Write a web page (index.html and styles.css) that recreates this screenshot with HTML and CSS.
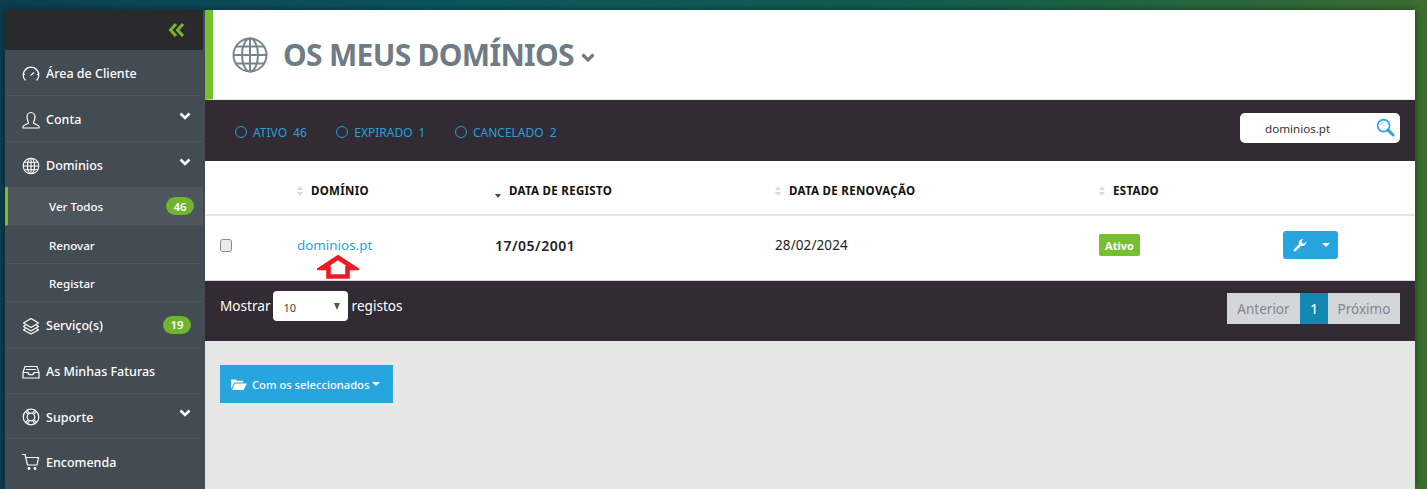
FILE: index.html
```html
<!DOCTYPE html>
<html lang="pt">
<head>
<meta charset="utf-8">
<title>Os Meus Domínios</title>
<link rel="stylesheet" href="styles.css">
</head>
<body>
<div class="app">
  <aside class="sidebar">
    <div class="side-top">
      <svg class="collapse" viewBox="0 0 16 14"><path d="M7.500 1 2 7l5.500 6M14.500 1 9 7l5.500 6" fill="none" stroke="#7ab52c" stroke-width="3"/></svg>
    </div>
    <nav class="menu">
      <a class="item h46">
        <svg class="ico" viewBox="0 0 18 18"><path d="M3.500 15.500A7.800 7.800 0 1 1 14.500 15.500M3 9.500H1.500M16.500 9.500H15M9 3V2M4.500 5 3.800 4.300M13.500 5l.7-.7M8.500 10.500 12 7.500" fill="none" stroke="#fff" stroke-width="1.200"/></svg>
        <span class="label">Área de Cliente</span>
      </a>
      <a class="item h46">
        <svg class="ico" viewBox="0 0 18 18"><path d="M1 17v-1.500c0-1.700 5-2.500 5.500-3.500.3-.8-1.500-2.500-1.500-6 0-2.500 1.700-4.500 4-4.500s4 2 4 4.500c0 3.500-1.800 5.200-1.500 6 .5 1 5.500 1.800 5.500 3.500V17z" fill="none" stroke="#fff" stroke-width="1.200"/></svg>
        <span class="label">Conta</span>
        <svg class="chev" viewBox="0 0 12 8"><path d="M1.500 1.500 6 6l4.500-4.500" fill="none" stroke="#fff" stroke-width="2.600"/></svg>
      </a>
      <a class="item h45">
        <svg class="ico" viewBox="0 0 18 18"><g fill="none" stroke="#fff" stroke-width="1.100"><circle cx="9" cy="9" r="7.800"/><ellipse cx="9" cy="9" rx="3.600" ry="7.800"/><path d="M9 1.200v15.600M1.200 9h15.600M2.200 5.200h13.600M2.200 12.800h13.600"/></g></svg>
        <span class="label">Dominios</span>
        <svg class="chev" viewBox="0 0 12 8"><path d="M1.500 1.500 6 6l4.500-4.500" fill="none" stroke="#fff" stroke-width="2.600"/></svg>
      </a>
      <a class="sub active"><span class="label">Ver Todos</span><span class="count">46</span></a>
      <a class="sub"><span class="label">Renovar</span></a>
      <a class="sub"><span class="label">Registar</span></a>
      <a class="item h46">
        <svg class="ico" viewBox="0 0 18 18"><g fill="none" stroke="#fff" stroke-width="1.200" stroke-linejoin="round"><path d="M9 1.500 16.500 6 9 10.500 1.500 6z"/><path d="M3.500 8 1.500 9.500 9 14l7.500-4.500L14.500 8"/><path d="M3.500 11.500 1.500 13 9 17l7.500-4-2-1.500"/></g></svg>
        <span class="label">Serviço(s)</span><span class="count c2">19</span>
      </a>
      <a class="item h46">
        <svg class="ico" viewBox="0 0 18 18"><path d="M1 9.500 3 3.500h12l2 6v5.500H1zM1 9.500h5c0 3 6 3 6 0h5M4 6.500h10" fill="none" stroke="#fff" stroke-width="1.200"/></svg>
        <span class="label">As Minhas Faturas</span>
      </a>
      <a class="item h45">
        <svg class="ico" viewBox="0 0 18 18"><g fill="none" stroke="#fff" stroke-width="1.200"><circle cx="9" cy="9" r="7.800"/><circle cx="9" cy="9" r="3.800"/><path d="M3.500 3.500 6.300 6.300M14.500 3.500l-2.800 2.800M3.500 14.500l2.800-2.800M14.500 14.500l-2.800-2.800M5.500 2.500 7.500 5.500M12.500 2.500l-2 3M5.500 15.500l2-3M12.500 15.500l-2-3"/></g></svg>
        <span class="label">Suporte</span>
        <svg class="chev" viewBox="0 0 12 8"><path d="M1.500 1.500 6 6l4.500-4.500" fill="none" stroke="#fff" stroke-width="2.600"/></svg>
      </a>
      <a class="item last">
        <svg class="ico" viewBox="0 0 18 18"><path d="M0 1.500h3l2.500 10.500h9.500l1.500-7.500H4" fill="none" stroke="#fff" stroke-width="1.200"/><circle cx="7" cy="15.500" r="1.400" fill="#fff"/><circle cx="13" cy="15.500" r="1.400" fill="#fff"/></svg>
        <span class="label">Encomenda</span>
      </a>
    </nav>
  </aside>

  <main class="main">
    <header class="title-bar">
      <svg class="title-ico" viewBox="0 0 36 36"><g fill="none" stroke="#78848c" stroke-width="2"><circle cx="18" cy="18" r="16.500"/><ellipse cx="18" cy="18" rx="8" ry="16.500"/><path d="M18 1.500v33M1.500 18h33M4 9.500h28M4 26.500h28"/></g></svg>
      <h1>OS MEUS DOMÍNIOS</h1>
      <svg class="title-chev" viewBox="0 0 14 9"><path d="M1.500 1.500 7 7l5.500-5.500" fill="none" stroke="#6e7b84" stroke-width="3.200"/></svg>
    </header>

    <section class="toolbar">
      <div class="filters">
        <a class="filter"><i class="ring"></i>ATIVO<b>46</b></a>
        <a class="filter"><i class="ring"></i>EXPIRADO<b>1</b></a>
        <a class="filter"><i class="ring"></i>CANCELADO<b>2</b></a>
      </div>
      <div class="search">
        <span>dominios.pt</span>
        <svg class="search-ico" viewBox="0 0 20 20"><circle cx="8" cy="8" r="6.300" fill="none" stroke="#26a5df" stroke-width="1.700"/><path d="M5 7.500A3.500 3.500 0 0 1 8 4.500" fill="none" stroke="#8dd0ef" stroke-width="1"/><path d="M12.500 12.500 18 18" stroke="#26a5df" stroke-width="3" stroke-linecap="round"/></svg>
      </div>
    </section>

    <section class="table">
      <div class="row head">
        <span></span>
        <span class="th"><i class="sort"></i>DOMÍNIO</span>
        <span class="th"><i class="sort down"></i>DATA DE REGISTO</span>
        <span class="th"><i class="sort"></i>DATA DE RENOVAÇÃO</span>
        <span class="th"><i class="sort"></i>ESTADO</span>
        <span></span>
      </div>
      <div class="row body">
        <span class="check"></span>
        <a class="domain">dominios.pt</a>
        <span class="reg">17/05/2001</span>
        <span class="ren">28/02/2024</span>
        <span class="status-cell"><em class="status">Ativo</em></span>
        <span class="tools">
          <svg class="wrench" viewBox="0 0 14 14"><path d="M1 13c-.6-.6-.5-1.300 0-1.800L6 6.300C5.200 3.800 7 .8 10.500 1L8.500 3.200l.6 2 2 .6L13 3.700c.3 3.300-2.700 5-5.200 4.200L2.800 13c-.5.500-1.200.6-1.800 0z" fill="#fff"/></svg>
          <i class="caret"></i>
        </span>
      </div>
      <svg class="arrow" viewBox="0 0 42 24"><path d="M21 2.500 37 13H30.500V21.500H11.500V13H5z" fill="#fff" stroke="#ed1c24" stroke-width="4.600"/></svg>
    </section>

    <section class="footer">
      <div class="length">
        <span>Mostrar</span>
        <span class="select"><span>10</span><i class="tri"></i></span>
        <span>registos</span>
      </div>
      <div class="pager">
        <a class="page prev">Anterior</a>
        <a class="page current">1</a>
        <a class="page next">Próximo</a>
      </div>
    </section>

    <section class="rest">
      <a class="bulk">
        <svg class="folder" viewBox="0 0 17 13"><path d="M0 12V1.500h5l1.500 1.500H13v2H3.500zM1 13l3-7h13l-3.500 7z" fill="#fff"/></svg>
        Com os seleccionados<i class="caret small"></i>
      </a>
    </section>
  </main>
</div>
</body>
</html>
```

FILE: styles.css
```css
* { box-sizing: border-box; }
html, body { margin: 0; height: 100%; }
body {
  width: 1427px;
  height: 489px;
  overflow: hidden;
  padding: 10px 12px 0 5px;
  font-family: "Noto Sans", "Open Sans", sans-serif;
  background: linear-gradient(90deg, #0d3f50 0%, #0c5560 30%, #16604a 70%, #3d6f30 100%);
}
a { text-decoration: none; }
.app {
  display: grid;
  grid-template-columns: 200px 1210px;
  height: 479px;
  box-shadow: 0 0 8px rgba(0, 0, 0, .45);
}
.sidebar { background: #424c52; display: flex; flex-direction: column; overflow: hidden; }
.side-top {
  height: 40px;
  width: 198px;
  background: #2a2a2c;
  display: flex;
  align-items: center;
  justify-content: flex-end;
  padding: 0 18px 0 0;
  flex: none;
}
.collapse { width: 17px; height: 14px; }
.menu { display: flex; flex-direction: column; width: 198px; flex: 1; }
.item, .sub {
  display: flex;
  align-items: center;
  color: #fff;
  border-bottom: 1px solid #4a545a;
  flex: none;
}
.item { padding: 2px 11px 0 17px; font-size: 12.500px; font-weight: 500; }
.h46 { height: 46px; }
.h45 { height: 46px; }
.item.h45:nth-child(3) { height: 45px; border-bottom: 0; }
.item.h45:nth-child(9) { height: 45px; }
.item.last { flex: 1; border: 0; padding: 0 11px 4px 17px; }
.ico { width: 18px; height: 18px; margin-right: 6px; flex: none; }
.label { flex: 1; white-space: nowrap; }
.chev { width: 12px; height: 8px; margin: -8px 1px 0 0; }
.sub {
  height: 38px;
  padding: 2px 9px 0 44px;
  font-size: 11.600px;
  font-weight: 500;
}
.sub.active { background: #4c565c; border-left: 3px solid #76bf2f; padding: 0 9px 0 41px; border-bottom: 1px solid #424c52; height: 39px; }
.count {
  width: 28px;
  height: 18px;
  border-radius: 9px;
  background: #6fb52f;
  color: #fff;
  font-size: 11.500px;
  font-weight: 600;
  display: flex;
  align-items: center;
  justify-content: center;
}
.c2 { margin-right: 1px; margin-top: -2px; }

.main { display: flex; flex-direction: column; min-width: 0; background: #e6e6e6; }
.title-bar {
  height: 90px;
  flex: none;
  background: #fff;
  border-left: 8px solid #76c032;
  display: flex;
  align-items: center;
  padding-left: 19px;
  border-bottom: 1px solid #e6e6e6;
}
.title-ico { width: 36px; height: 36px; margin: 0 15px 0 0; }
h1 {
  margin: -1px 0 0;
  font-size: 30px;
  font-weight: 700;
  color: #6f7c85;
  letter-spacing: -.7px;
  white-space: nowrap;
}
.title-chev { width: 14px; height: 9px; margin: 6px 0 0 7px; }

.toolbar {
  height: 61px;
  flex: none;
  background: #322b34;
  display: flex;
  align-items: center;
  justify-content: space-between;
  padding: 0 15px 0 30px;
}
.filters { display: flex; gap: 29.500px; margin-top: 3px; }
.filter { color: #26a0da; font-size: 12px; display: flex; align-items: center; white-space: nowrap; }
.filter b { font-weight: 400; margin-left: 6px; }
.ring { width: 12px; height: 12px; border: 1.500px solid #26a0da; border-radius: 50%; margin-right: 6px; }
.search {
  width: 160px;
  height: 30px;
  background: #fff;
  border-radius: 5px;
  display: flex;
  align-items: center;
  justify-content: space-between;
  padding: 0 5px 0 25px;
  font-size: 11.600px;
  color: #333;
  margin-top: -5px;
}
.search-ico { width: 19px; height: 19px; margin-top: -1px; }

.table { position: relative; flex: none; background: #fff; }
.row { display: grid; grid-template-columns: 92px 198px 280px 324px 184px 132px; align-items: center; }
.head { height: 55px; border-bottom: 2px solid #e6e6e6; padding-top: 6px; }
.th { font-size: 11.500px; font-weight: 700; color: #111; display: flex; align-items: center; letter-spacing: .3px; white-space: nowrap; }
.sort { width: 6px; height: 10px; margin-right: 8px; position: relative; }
.sort::before, .sort::after {
  content: "";
  position: absolute;
  left: 0;
  border-left: 3px solid transparent;
  border-right: 3px solid transparent;
}
.sort::before { top: 0; border-bottom: 4px solid #d9d9d9; }
.sort::after { bottom: 0; border-top: 4px solid #d9d9d9; }
.sort.down::before { display: none; }
.sort.down::after { border-top-color: #444; bottom: -2px; }
.body { height: 65px; border-bottom: 1px solid #d9d9d9; padding-bottom: 6px; }
.check {
  width: 12px;
  height: 13px;
  margin: 0 0 0 15px;
  border: 1px solid #8c8c8c;
  border-radius: 2.500px;
  background: #eaeaea;
}
.domain { color: #2a9fdc; font-size: 13.400px; }
.reg { font-size: 14px; font-weight: 600; color: #222; letter-spacing: .5px; }
.ren { font-size: 13.500px; color: #222; letter-spacing: .1px; }
.status-cell { display: flex; }
.status {
  display: inline-flex;
  align-items: center;
  justify-content: center;
  width: 41px;
  height: 22px;
  background: #76bf2f;
  color: #fff;
  border-radius: 2px;
  font-style: normal;
  font-weight: 700;
  font-size: 11px;
}
.tools {
  width: 55px;
  height: 28px;
  background: #26a5df;
  border-radius: 3px;
  display: flex;
  align-items: center;
  padding-left: 10px;
  gap: 15px;
}
.wrench { width: 14px; height: 14px; }
.caret { border-left: 4px solid transparent; border-right: 4px solid transparent; border-top: 4px solid #fff; width: 0; height: 0; }
.caret.small { display: inline-block; border-width: 4px 4px 0; margin-left: 3px; vertical-align: 2px; }
.arrow { position: absolute; left: 112px; top: 94px; width: 42px; height: 24px; }

.footer {
  height: 60px;
  flex: none;
  background: #322b34;
  display: flex;
  justify-content: space-between;
  padding: 10px 15px 0 15px;
  align-items: flex-start;
}
.length { display: flex; align-items: center; gap: 3px; color: #fff; font-size: 13.600px; }
.length > span:first-child, .length > span:last-child { margin-top: -2px; }
.select {
  width: 75px;
  height: 30px;
  margin: 0 1px 0 -1px;
  background: #fff;
  border-radius: 4px;
  color: #444;
  font-size: 11px;
  display: flex;
  align-items: center;
  justify-content: space-between;
  padding: 2px 8px 0 11px;
}
.tri { border-left: 3.500px solid transparent; border-right: 3.500px solid transparent; border-top: 7px solid #555; margin-top: -2px; }
.pager { display: flex; height: 31px; margin-top: 2px; }
.page { background: #d3d7da; color: #7f878d; font-size: 13.500px; display: flex; align-items: center; justify-content: center; }
.prev { width: 73px; }
.next { width: 72px; }
.current { background: #1388b3; color: #fff; font-weight: 500; width: 28px; }

.rest { flex: 1; padding: 24px 15px 0; }
.bulk {
  display: inline-flex;
  align-items: center;
  width: 173px;
  height: 38px;
  background: #26a5df;
  color: #fff;
  font-size: 11.200px;
  font-weight: 500;
  padding-left: 11px;
  white-space: nowrap;
}
.folder { width: 16px; height: 12px; margin-right: 5px; }
```
